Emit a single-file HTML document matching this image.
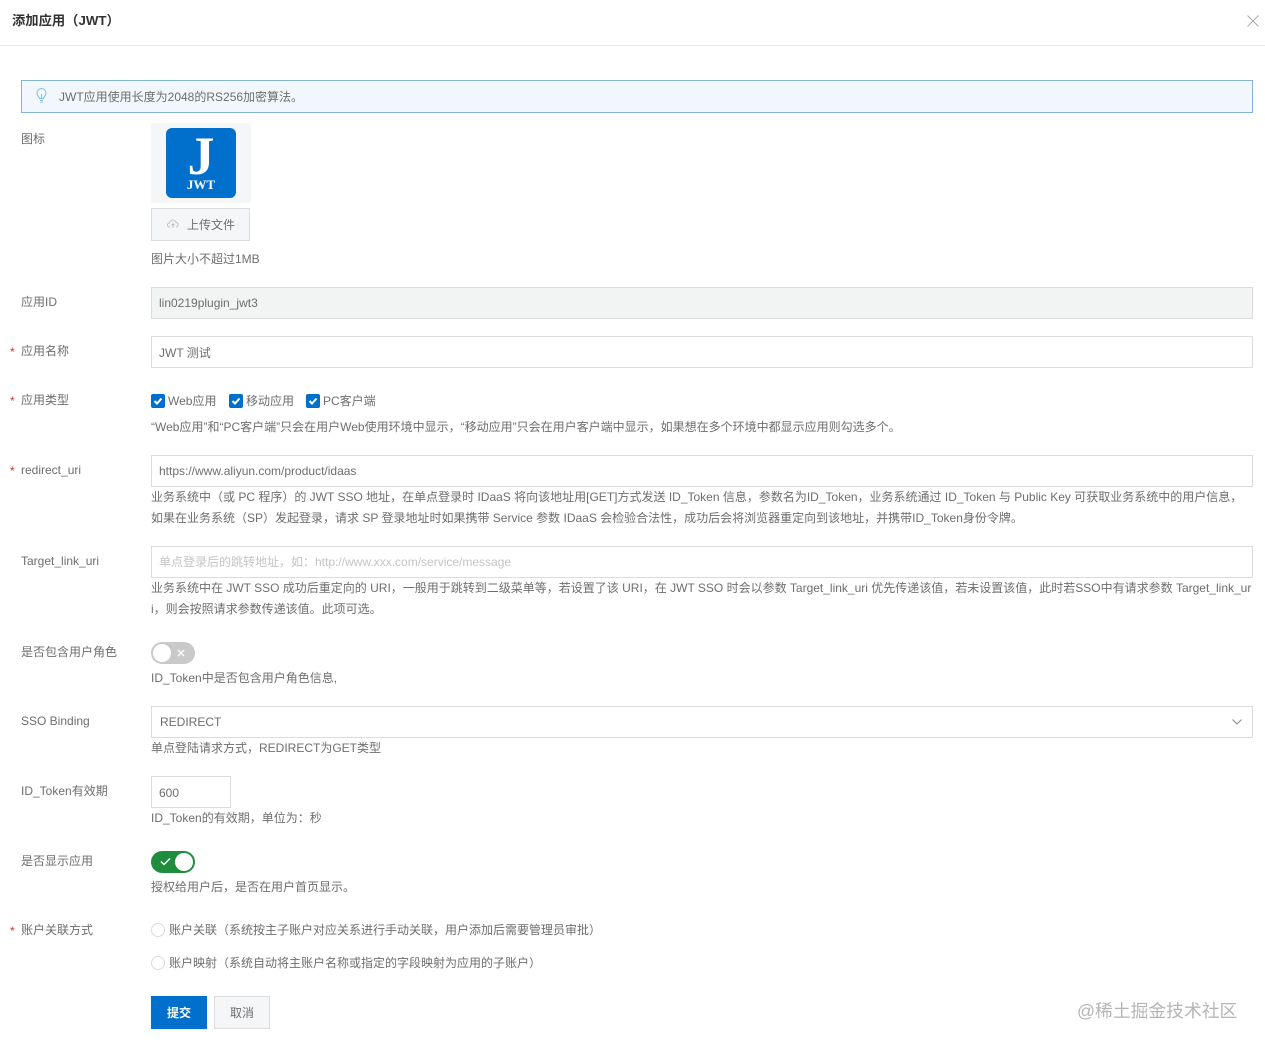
<!DOCTYPE html>
<html lang="zh">
<head>
<meta charset="utf-8">
<style>
html,body{margin:0;padding:0;background:#fff}
body{position:relative;width:1265px;height:1049px;overflow:hidden;font-family:"Liberation Sans","Noto Sans CJK SC",sans-serif;font-size:12px;color:#666}
.t{position:absolute;white-space:nowrap;line-height:16px;color:#6e6e6e}
.b{position:absolute;box-sizing:border-box;border:1px solid #dcdcdc;background:#fff}
.req{position:absolute;color:#d93026;font-size:12px;line-height:16px;left:10px}
.cb{position:absolute;width:14px;height:14px;background:#0070cc;border-radius:2px;top:394px}
.cb svg{display:block}
.r{position:absolute;left:151px;width:14px;height:14px;box-sizing:border-box;border:1px solid #dcdcdc;border-radius:50%;background:#fff}
</style>
</head>
<body>
<div class="t" style="left:12px;top:13px;font-size:13.300px;font-weight:bold;color:#333">添加应用（JWT）</div>
<svg style="position:absolute;left:1247px;top:15px" width="12" height="12" viewBox="0 0 12 12"><path d="M.5.5l11 11M11.500.5l-11 11" stroke="#aaa" stroke-width="1" fill="none"/></svg>
<div style="position:absolute;left:0;top:45px;width:1265px;height:1px;background:#e8e8e8"></div>

<div class="b" style="left:21px;top:80px;width:1232px;height:33px;background:#f1f7fd;border-color:#85b3d3"></div>
<svg style="position:absolute;left:35px;top:87px" width="13" height="17" viewBox="0 0 13 17"><path d="M4.500 11.500C4.200 9.800 2 8.800 2 6A4.500 4.500 0 0 1 11 6C11 8.800 8.800 9.800 8.500 11.500ZM5 13.500h3M5.500 15.200h2M6.500 7v4.500" stroke="#7fc0e6" fill="none" stroke-width="1"/></svg>
<div class="t" style="left:59px;top:89px">JWT应用使用长度为2048的RS256加密算法。</div>

<div class="t" style="left:21px;top:131px">图标</div>
<div style="position:absolute;left:151px;top:123px;width:100px;height:80px;background:#f5f6f7"></div>
<div style="position:absolute;left:166px;top:128px;width:70px;height:70px;background:#0070cc;border-radius:6px"></div>
<div class="t" style="left:166px;top:124px;width:70px;text-align:center;color:#fff;font:bold 54px/64px 'Liberation Serif',serif">J</div>
<div class="t" style="left:166px;top:177px;width:70px;text-align:center;color:#fff;font:bold 13px/15px 'Liberation Serif',serif">JWT</div>
<div class="b" style="left:151px;top:208px;width:99px;height:33px;background:#f5f6f7"></div>
<svg style="position:absolute;left:167px;top:219px" width="12" height="10" viewBox="0 0 12 10"><path d="M3 8H2.500A2 2 0 0 1 2.500 4 3.300 3.300 0 0 1 9 3.500 2.300 2.300 0 0 1 9.500 8H9M6 9V5M4.500 6.300L6 4.800 7.500 6.300" fill="none" stroke="#bbb" stroke-width=".9"/></svg>
<div class="t" style="left:187px;top:217px">上传文件</div>
<div class="t" style="left:151px;top:251px">图片大小不超过1MB</div>

<div class="t" style="left:21px;top:294px">应用ID</div>
<div class="b" style="left:151px;top:287px;width:1102px;height:32px;background:#f2f3f3"></div>
<div class="t" style="left:159px;top:295px">lin0219plugin_jwt3</div>

<div class="req" style="top:344px">*</div>
<div class="t" style="left:21px;top:343px">应用名称</div>
<div class="b" style="left:151px;top:336px;width:1102px;height:32px"></div>
<div class="t" style="left:159px;top:345px">JWT 测试</div>

<div class="req" style="top:393px">*</div>
<div class="t" style="left:21px;top:392px">应用类型</div>
<div class="cb" style="left:151px"><svg width="14" height="14" viewBox="0 0 14 14"><path d="M3.500 7l2.500 2.500 4.500-5" stroke="#fff" stroke-width="2" fill="none"/></svg></div>
<div class="t" style="left:168px;top:393px">Web应用</div>
<div class="cb" style="left:229px"><svg width="14" height="14" viewBox="0 0 14 14"><path d="M3.500 7l2.500 2.500 4.500-5" stroke="#fff" stroke-width="2" fill="none"/></svg></div>
<div class="t" style="left:246px;top:393px">移动应用</div>
<div class="cb" style="left:306px"><svg width="14" height="14" viewBox="0 0 14 14"><path d="M3.500 7l2.500 2.500 4.500-5" stroke="#fff" stroke-width="2" fill="none"/></svg></div>
<div class="t" style="left:323px;top:393px">PC客户端</div>
<div class="t" style="left:151px;top:419px">“Web应用”和“PC客户端”只会在用户Web使用环境中显示，“移动应用”只会在用户客户端中显示，如果想在多个环境中都显示应用则勾选多个。</div>

<div class="req" style="top:463px">*</div>
<div class="t" style="left:21px;top:462px">redirect_uri</div>
<div class="b" style="left:151px;top:455px;width:1102px;height:32px"></div>
<div class="t" style="left:159px;top:463px">https://www.aliyun.com/product/idaas</div>
<div class="t" style="left:151px;top:489px">业务系统中（或 PC 程序）的 JWT SSO 地址，在单点登录时 IDaaS 将向该地址用[GET]方式发送 ID_Token 信息，参数名为ID_Token，业务系统通过 ID_Token 与 Public Key 可获取业务系统中的用户信息，</div>
<div class="t" style="left:151px;top:510px">如果在业务系统（SP）发起登录，请求 SP 登录地址时如果携带 Service 参数 IDaaS 会检验合法性，成功后会将浏览器重定向到该地址，并携带ID_Token身份令牌。</div>

<div class="t" style="left:21px;top:553px">Target_link_uri</div>
<div class="b" style="left:151px;top:546px;width:1102px;height:32px"></div>
<div class="t" style="left:159px;top:554px;color:#c4c4c4">单点登录后的跳转地址，如：http://www.xxx.com/service/message</div>
<div class="t" style="left:151px;top:580px">业务系统中在 JWT SSO 成功后重定向的 URI，一般用于跳转到二级菜单等，若设置了该 URI，在 JWT SSO 时会以参数 Target_link_uri 优先传递该值，若未设置该值，此时若SSO中有请求参数 Target_link_ur</div>
<div class="t" style="left:151px;top:601px">i，则会按照请求参数传递该值。此项可选。</div>

<div class="t" style="left:21px;top:644px">是否包含用户角色</div>
<div style="position:absolute;left:151px;top:642px;width:44px;height:22px;border-radius:11px;background:#c9c9c9"></div>
<div style="position:absolute;left:153px;top:644px;width:18px;height:18px;border-radius:50%;background:#fff"></div>
<svg style="position:absolute;left:177px;top:649px" width="8" height="8" viewBox="0 0 8 8"><path d="M1 1l6 6M7 1L1 7" stroke="#fff" stroke-width="1.300"/></svg>
<div class="t" style="left:151px;top:670px">ID_Token中是否包含用户角色信息,</div>

<div class="t" style="left:21px;top:713px">SSO Binding</div>
<div class="b" style="left:151px;top:706px;width:1102px;height:32px"></div>
<div class="t" style="left:160px;top:714px">REDIRECT</div>
<svg style="position:absolute;left:1232px;top:719px" width="10" height="6" viewBox="0 0 10 6"><path d="M.5.500L5 5 9.500.500" stroke="#888" fill="none"/></svg>
<div class="t" style="left:151px;top:740px">单点登陆请求方式，REDIRECT为GET类型</div>

<div class="t" style="left:21px;top:783px">ID_Token有效期</div>
<div class="b" style="left:151px;top:776px;width:80px;height:32px"></div>
<div class="t" style="left:159px;top:785px">600</div>
<div class="t" style="left:151px;top:810px">ID_Token的有效期，单位为：秒</div>

<div class="t" style="left:21px;top:853px">是否显示应用</div>
<div style="position:absolute;left:151px;top:851px;width:44px;height:22px;border-radius:11px;background:#1e8e3e"></div>
<div style="position:absolute;left:175px;top:853px;width:18px;height:18px;border-radius:50%;background:#fff"></div>
<svg style="position:absolute;left:160px;top:857px" width="11" height="9" viewBox="0 0 11 9"><path d="M1 4.500l3 3 6-6" stroke="#fff" stroke-width="1.400" fill="none"/></svg>
<div class="t" style="left:151px;top:879px">授权给用户后，是否在用户首页显示。</div>

<div class="req" style="top:923px">*</div>
<div class="t" style="left:21px;top:922px">账户关联方式</div>
<div class="r" style="top:923px"></div>
<div class="t" style="left:169px;top:922px">账户关联（系统按主子账户对应关系进行手动关联，用户添加后需要管理员审批）</div>
<div class="r" style="top:956px"></div>
<div class="t" style="left:169px;top:955px">账户映射（系统自动将主账户名称或指定的字段映射为应用的子账户）</div>

<div style="position:absolute;left:151px;top:996px;width:56px;height:33px;background:#0070cc"></div>
<div class="t" style="left:151px;top:1005px;width:56px;text-align:center;color:#fff;font-weight:bold">提交</div>
<div class="b" style="left:214px;top:996px;width:56px;height:33px;background:#f5f6f7"></div>
<div class="t" style="left:214px;top:1005px;width:56px;text-align:center">取消</div>

<div class="t" style="left:1077px;top:1000px;font-size:17.800px;line-height:22px;color:#b5b5b5">@稀土掘金技术社区</div>
</body>
</html>
